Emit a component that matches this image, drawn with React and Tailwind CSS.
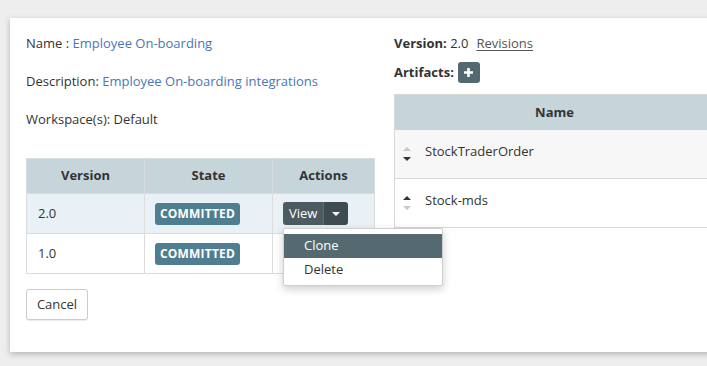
import React from 'react';

const font = { fontFamily: '"Open Sans", "Noto Sans", sans-serif' };

const SortArrows = ({ active }) => (
  <div className="flex flex-col items-center gap-[6px] w-[8px]">
    <span
      className={`block w-0 h-0 border-l-[4px] border-r-[4px] border-b-[4px] border-l-transparent border-r-transparent ${
        active === 'up' ? 'border-b-[#333]' : 'border-b-[#c8c8c8]'
      }`}
    />
    <span
      className={`block w-0 h-0 border-l-[4px] border-r-[4px] border-t-[4px] border-l-transparent border-r-transparent ${
        active === 'down' ? 'border-t-[#333]' : 'border-t-[#c8c8c8]'
      }`}
    />
  </div>
);

const Badge = () => (
  <span className="inline-flex items-center justify-center w-[85px] h-[22px] rounded-[3px] bg-[#4f7e90] text-white text-[12px] font-bold tracking-[0.2px]">
    COMMITTED
  </span>
);

const App = () => {
  return (
    <div className="w-[707px] h-[366px] overflow-hidden bg-[#eeeeee] pt-[18px] pl-[10px] text-[#333] text-[13px]" style={font}>
      <div className="w-[740px] h-[334px] bg-white shadow-[0_2px_6px_rgba(0,0,0,0.25)] flex px-4">
        {/* Left side */}
        <div className="w-[349px] pt-[15px]">
          <p className="leading-5">
            Name : <span className="text-[#4a76b8]">Employee On-boarding</span>
          </p>
          <p className="leading-5 mt-[18px]">
            Description: <span className="text-[#4a76b8]">Employee On-boarding integrations</span>
          </p>
          <p className="leading-5 mt-[18px]">Workspace(s): Default</p>

          <table className="mt-[29px] w-[349px] border-collapse table-fixed">
            <thead>
              <tr className="bg-[#c6d5da] h-[35px]">
                <th className="w-[118px] border border-[#d6dde0] font-bold text-center">Version</th>
                <th className="w-[128px] border border-[#d6dde0] font-bold text-center">State</th>
                <th className="border border-[#d6dde0] font-bold text-center">Actions</th>
              </tr>
            </thead>
            <tbody>
              <tr className="bg-[#e9f0f6] h-[40px]">
                <td className="border border-[#dcdcdc] pl-[11px]">2.0</td>
                <td className="border border-[#dcdcdc] pl-[10px]">
                  <Badge />
                </td>
                <td className="border border-[#dcdcdc] pl-[10px]">
                  <div className="relative inline-flex h-[23px] rounded-[3px] overflow-visible">
                    <span className="flex items-center px-[6px] w-[40px] bg-[#4b5b61] text-white rounded-l-[3px]">View</span>
                    <span className="flex items-center justify-center w-[25px] bg-[#3e4b50] rounded-r-[3px] border-l border-[#5f6e73]">
                      <span className="block w-0 h-0 border-l-[4px] border-r-[4px] border-t-[4px] border-l-transparent border-r-transparent border-t-white" />
                    </span>
                    <div className="absolute left-0 top-[26px] w-[160px] h-[58px] bg-white border border-[#cfcfcf] rounded-[2px] shadow-[0_3px_8px_rgba(0,0,0,0.2)] pt-[5px] pb-[3px] z-10">
                      <div className="h-[24px] flex items-center pl-[20px] bg-[#546a70] text-white">Clone</div>
                      <div className="h-[24px] flex items-center pl-[20px] text-[#333]">Delete</div>
                    </div>
                  </div>
                </td>
              </tr>
              <tr className="bg-white h-[40px]">
                <td className="border border-[#dcdcdc] pl-[11px]">1.0</td>
                <td className="border border-[#dcdcdc] pl-[10px]">
                  <Badge />
                </td>
                <td className="border border-[#dcdcdc] pl-[10px]">
                  <span className="inline-block w-[40px] h-[23px] bg-[#4b5b61] rounded-[3px]" />
                </td>
              </tr>
            </tbody>
          </table>

          <button className="mt-[15px] w-[62px] h-[31px] border border-[#cccccc] rounded-[3px] bg-white text-[#333] shadow-[0_1px_0_rgba(0,0,0,0.08)]">
            Cancel
          </button>
        </div>

        {/* Right side */}
        <div className="ml-[19px] flex-1 pt-[15px]">
          <p className="leading-5">
            <span className="font-bold">Version:</span> 2.0
            <a className="ml-[8px] text-[#555] underline underline-offset-2">Revisions</a>
          </p>
          <div className="flex items-center mt-[9px] h-[21px]">
            <span className="font-bold">Artifacts:</span>
            <span className="ml-[4px] w-[22px] h-[21px] rounded-[3px] bg-[#536970] flex items-center justify-center">
              <svg width="11" height="11" viewBox="0 0 11 11">
                <path d="M5.5 1v9M1 5.5h9" stroke="white" strokeWidth="2.6" />
              </svg>
            </span>
          </div>

          <div className="mt-[11px] w-[320px] border-l border-t border-[#d8d8d8]">
            <div className="h-[35px] bg-[#c6d5da] flex items-center justify-center font-bold">Name</div>
            <div className="h-[49px] bg-[#f7f7f7] border-b border-[#d8d8d8] flex items-center pl-[8px] gap-[14px]">
              <SortArrows active="down" />
              <span className="pb-[4px]">StockTraderOrder</span>
            </div>
            <div className="h-[49px] bg-white border-b border-[#d8d8d8] flex items-center pl-[8px] gap-[14px]">
              <SortArrows active="up" />
              <span className="pb-[4px]">Stock-mds</span>
            </div>
          </div>
        </div>
      </div>
    </div>
  );
};

export default App;
